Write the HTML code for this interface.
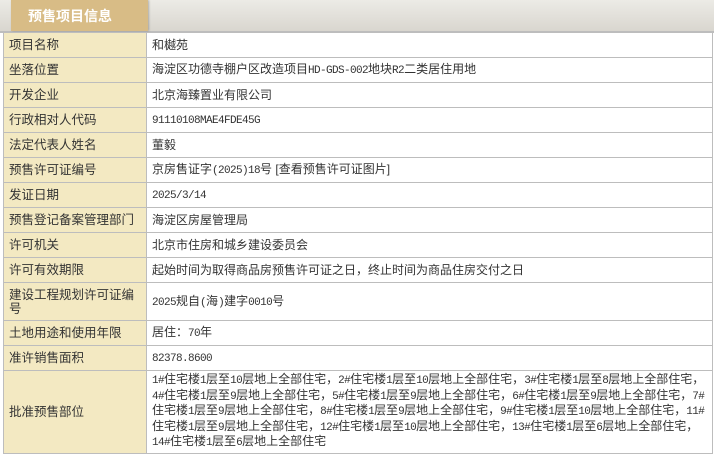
<!DOCTYPE html>
<html><head><meta charset="utf-8"><style>
body{margin:0;width:714px;height:454px;background:#fff;font-family:"Liberation Sans","Noto Sans CJK SC",sans-serif;font-size:12px;color:#333;overflow:hidden;position:relative}
.hd{position:absolute;left:0;top:0;width:714px;background:linear-gradient(#ecebe6,#d9d6cf);border-bottom:2px solid #bdbdbd;box-sizing:border-box;height:33px}
.tab{position:absolute;left:11px;top:0;width:137px;height:31px;background:#d8bc86;color:#fff;font-weight:bold;font-size:14px;line-height:33px;padding-left:17px;box-sizing:border-box;box-shadow:1px 0 2px rgba(0,0,0,.25)}
table{position:absolute;left:3px;top:32px;width:710px;border-collapse:collapse}
td{border:1px solid #bdbdbd;height:24px;padding:0 0 0 5px;vertical-align:middle;line-height:14px}
td.l{width:137px;background:#f3e9c2;font-size:12.5px}
.m{font-family:"Liberation Mono",monospace;font-size:11px;letter-spacing:-0.6px;font-style:normal}
.nw{white-space:nowrap;line-height:13.6px;padding-top:2px;padding-bottom:2px}
</style></head><body>
<div class="hd"><div class="tab">预售项目信息</div></div>
<table>
<tr><td class="l">项目名称</td><td>和樾苑</td></tr>
<tr><td class="l">坐落位置</td><td>海淀区功德寺棚户区改造项目<i class="m">HD-GDS-002</i>地块<i class="m">R2</i>二类居住用地</td></tr>
<tr><td class="l">开发企业</td><td>北京海臻置业有限公司</td></tr>
<tr><td class="l">行政相对人代码</td><td><i class="m">91110108MAE4FDE45G</i></td></tr>
<tr><td class="l">法定代表人姓名</td><td>董毅</td></tr>
<tr><td class="l">预售许可证编号</td><td>京房售证字<i class="m">(2025)18</i>号 [查看预售许可证图片]</td></tr>
<tr><td class="l">发证日期</td><td><i class="m">2025/3/14</i></td></tr>
<tr><td class="l">预售登记备案管理部门</td><td>海淀区房屋管理局</td></tr>
<tr><td class="l">许可机关</td><td>北京市住房和城乡建设委员会</td></tr>
<tr><td class="l">许可有效期限</td><td>起始时间为取得商品房预售许可证之日，终止时间为商品住房交付之日</td></tr>
<tr><td class="l" style="height:37px">建设工程规划许可证编<br>号</td><td><i class="m">2025</i>规自<i class="m">(</i>海<i class="m">)</i>建字<i class="m">0010</i>号</td></tr>
<tr><td class="l">土地用途和使用年限</td><td>居住：<i class="m">70</i>年</td></tr>
<tr><td class="l">准许销售面积</td><td><i class="m">82378.8600</i></td></tr>
<tr><td class="l" style="height:77px">批准预售部位</td><td class="nw"><i class="m">1#</i>住宅楼<i class="m">1</i>层至<i class="m">10</i>层地上全部住宅，<i class="m">2#</i>住宅楼<i class="m">1</i>层至<i class="m">10</i>层地上全部住宅，<i class="m">3#</i>住宅楼<i class="m">1</i>层至<i class="m">8</i>层地上全部住宅，<br><i class="m">4#</i>住宅楼<i class="m">1</i>层至<i class="m">9</i>层地上全部住宅，<i class="m">5#</i>住宅楼<i class="m">1</i>层至<i class="m">9</i>层地上全部住宅，<i class="m">6#</i>住宅楼<i class="m">1</i>层至<i class="m">9</i>层地上全部住宅，<i class="m">7#</i><br>住宅楼<i class="m">1</i>层至<i class="m">9</i>层地上全部住宅，<i class="m">8#</i>住宅楼<i class="m">1</i>层至<i class="m">9</i>层地上全部住宅，<i class="m">9#</i>住宅楼<i class="m">1</i>层至<i class="m">10</i>层地上全部住宅，<i class="m">11#</i><br>住宅楼<i class="m">1</i>层至<i class="m">9</i>层地上全部住宅，<i class="m">12#</i>住宅楼<i class="m">1</i>层至<i class="m">10</i>层地上全部住宅，<i class="m">13#</i>住宅楼<i class="m">1</i>层至<i class="m">6</i>层地上全部住宅，<br><i class="m">14#</i>住宅楼<i class="m">1</i>层至<i class="m">6</i>层地上全部住宅</td></tr>
</table>
</body></html>
